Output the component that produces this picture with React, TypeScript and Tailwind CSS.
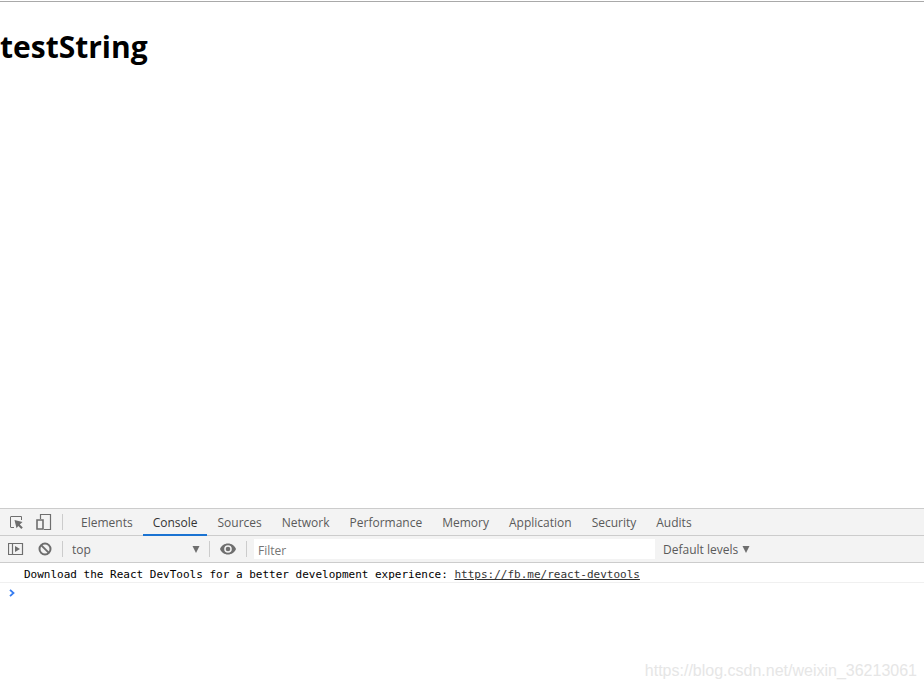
import React from 'react';

const tabs = [
  'Elements',
  'Console',
  'Sources',
  'Network',
  'Performance',
  'Memory',
  'Application',
  'Security',
  'Audits',
];

function Divider() {
  return <div className="w-px h-4 bg-[#ccc] shrink-0" />;
}

function InspectIcon() {
  return (
    <svg width="16" height="16" viewBox="0 0 16 16" fill="none">
      <path d="M6 13.500H3a.5.5 0 0 1-.5-.5V3a.5.5 0 0 1 .5-.5h10.500V6" stroke="#6e6e6e" />
      <path d="M6.500 6l2 8.300 1.800-2.400 3 3 1.500-1.500-3-3L14.500 8z" fill="#6e6e6e" />
    </svg>
  );
}

function DeviceIcon() {
  return (
    <svg width="16" height="16" viewBox="0 0 16 16" fill="none" stroke="#6e6e6e">
      <path d="M4.500 5V.5h10v15H8" strokeWidth="1.200" />
      <path d="M1 6h6v9H1z" strokeWidth="1.600" />
    </svg>
  );
}

function SidebarIcon() {
  return (
    <svg width="16" height="14" viewBox="0 0 16 14" fill="none">
      <path d="M.5 1.500h14v11H.5zM4.500 1.500v11" stroke="#6e6e6e" strokeWidth="1.200" />
      <path d="M7 4v6l5-3z" fill="#6e6e6e" />
    </svg>
  );
}

function ClearIcon() {
  return (
    <svg width="14" height="14" viewBox="0 0 14 14" fill="none" stroke="#6e6e6e" strokeWidth="2">
      <circle cx="7" cy="7" r="5.500" />
      <path d="M3.100 3.100l7.800 7.800" />
    </svg>
  );
}

function EyeIcon() {
  return (
    <svg width="16" height="12" viewBox="0 0 16 12">
      <path
        d="M8 .5C4.400.5 1.300 2.700 0 6c1.300 3.300 4.400 5.500 8 5.500s6.700-2.200 8-5.500C14.700 2.700 11.600.5 8 .5zm0 9.300a3.800 3.800 0 1 1 0-7.600 3.800 3.800 0 0 1 0 7.600z"
        fill="#6e6e6e"
        fillRule="evenodd"
      />
      <circle cx="8" cy="6" r="2.300" fill="#6e6e6e" />
    </svg>
  );
}

function Caret() {
  return (
    <svg width="8" height="7" viewBox="0 0 8 7" className="shrink-0">
      <path d="M.5 0h7L4 7z" fill="#6e6e6e" />
    </svg>
  );
}

export default function App() {
  return (
    <div className="min-h-screen flex flex-col bg-white font-['Open_Sans','Noto_Sans',sans-serif] text-xs text-[#5a5a5a]">
      <main className="flex-1 mt-px border-t border-[#a9a9a9] pt-6">
        <h1 className="text-[30px] leading-[42px] font-bold text-black">testString</h1>
      </main>

      <section className="relative h-[181px] border-t border-[#ccc]">
        {/* Panel tabs */}
        <div className="flex items-center h-[27px] bg-[#f3f3f3] border-b border-[#ccc]">
          <div className="flex items-center gap-3 pl-2 pr-[10px]">
            <button type="button" aria-label="Inspect element"><InspectIcon /></button>
            <button type="button" aria-label="Toggle device toolbar"><DeviceIcon /></button>
          </div>
          <Divider />
          <nav className="flex h-[27px] pl-2">
            {tabs.map((tab) => (
              <button
                key={tab}
                type="button"
                className={
                  tab === 'Console'
                    ? 'px-[10px] border-b-2 border-[#1a73d2] pt-1 text-[#333]'
                    : 'px-[10px] border-b-2 border-transparent pt-1'
                }
              >
                {tab}
              </button>
            ))}
          </nav>
        </div>

        {/* Console toolbar */}
        <div className="flex items-center h-[27px] bg-[#f3f3f3] border-b border-[#ccc]">
          <div className="flex items-center gap-[14px] pl-2 pr-[10px]">
            <button type="button" aria-label="Show console sidebar"><SidebarIcon /></button>
            <button type="button" aria-label="Clear console"><ClearIcon /></button>
          </div>
          <Divider />
          <div className="relative flex items-center w-[146px]">
            <select aria-label="Context" className="appearance-none w-full pl-[9px] pt-0.5 bg-transparent">
              <option>top</option>
            </select>
            <div className="absolute right-[9px] pointer-events-none"><Caret /></div>
          </div>
          <Divider />
          <button type="button" aria-label="Live expression" className="px-[10px]"><EyeIcon /></button>
          <Divider />
          <input
            type="text"
            aria-label="Filter"
            placeholder="Filter"
            className="ml-[7px] pl-1 pt-0.5 h-5 w-[43.4%] bg-white placeholder:text-[#757575] outline-none"
          />
          <button type="button" className="flex items-center gap-1 ml-2">
            <span className="pt-0.5">Default levels</span>
            <Caret />
          </button>
        </div>

        {/* Messages */}
        <div className="font-['DejaVu_Sans_Mono',monospace] text-[11px] text-black">
          <p className="h-5 leading-6 pl-6 border-b border-[#f0f0f0] whitespace-nowrap">
            Download the React DevTools for a better development experience:{' '}
            <a href="https://fb.me/react-devtools" className="underline text-[#333]">
              https://fb.me/react-devtools
            </a>
          </p>
          <div className="flex items-center h-5 pl-[9px]">
            <svg width="6" height="8" viewBox="0 0 6 8" fill="none">
              <path d="M1 .8L4.500 4 1 7.200" stroke="#367cf1" strokeWidth="1.800" />
            </svg>
          </div>
        </div>

        <div className="absolute right-[7px] bottom-2 font-['Liberation_Sans',sans-serif] text-base leading-5 text-[#e6e6e6]">
          https://blog.csdn.net/weixin_36213061
        </div>
      </section>
    </div>
  );
}
